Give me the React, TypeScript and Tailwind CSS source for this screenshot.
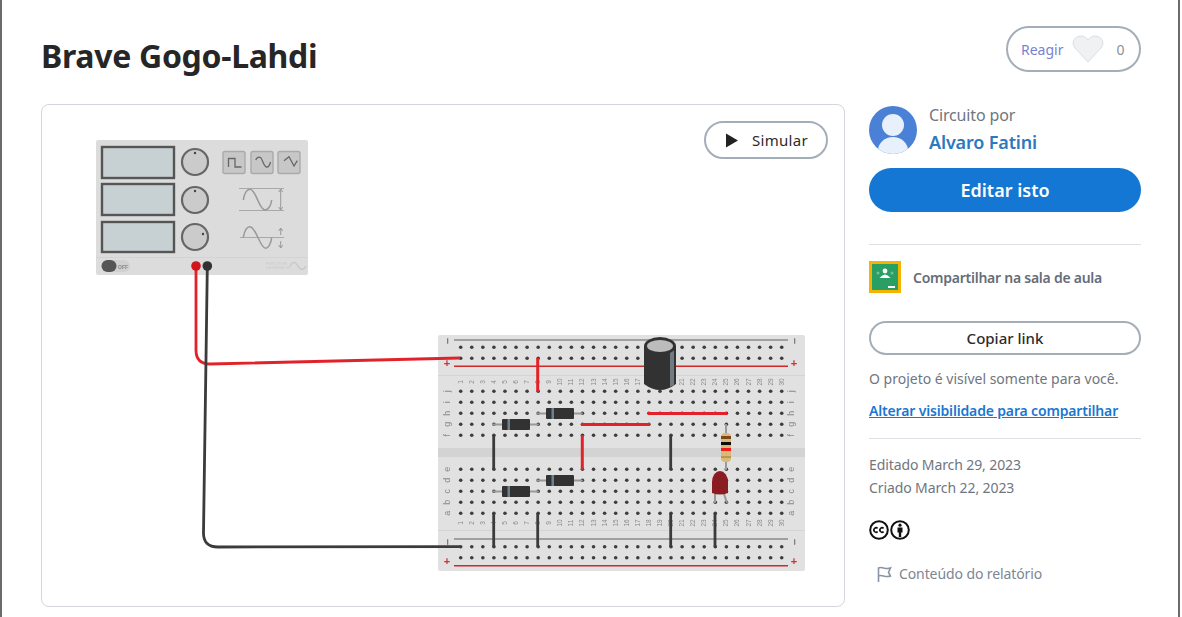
import React from "react";

const font = "[font-family:'Noto_Sans',sans-serif]";

const cols = Array.from({ length: 30 }, (_, i) => 460.7 + i * 11.07);
const railRows = [347.3, 358.3, 546.7, 557.7];
const gridRows = [391.3, 402.3, 413.3, 424.3, 435.3, 469.3, 480.3, 491.3, 502.3, 513.3];
const gridLetters = ["j", "i", "h", "g", "f", "e", "d", "c", "b", "a"];

const Diode = ({ x, y }: { x: number; y: number }) => (
  <g>
    <line x1={x} y1={y} x2={x + 45} y2={y} stroke="#999" strokeWidth="2" strokeLinecap="round" />
    <rect x={x + 9} y={y - 5.5} width="28" height="11" rx="1" fill="#333" />
    <rect x={x + 14.5} y={y - 5.5} width="2.5" height="11" fill="#6d8291" />
  </g>
);

const Breadboard = () => (
  <g>
    <rect x="438" y="335" width="367" height="236" rx="2" fill="#e1e1e1" />
    <rect x="438" y="448" width="367" height="9" fill="#d3d3d3" />
    <line x1="438" y1="375.5" x2="805" y2="375.5" stroke="#d4d4d4" />
    <line x1="438" y1="530.5" x2="805" y2="530.5" stroke="#d4d4d4" />
    <line x1="454" y1="340" x2="788" y2="340" stroke="#8a8a8a" strokeWidth="1.6" />
    <line x1="454" y1="366.3" x2="788" y2="366.3" stroke="#cf2b2b" strokeWidth="1.5" />
    <line x1="454" y1="539" x2="788" y2="539" stroke="#8a8a8a" strokeWidth="1.6" />
    <line x1="454" y1="565.7" x2="788" y2="565.7" stroke="#cf2b2b" strokeWidth="1.5" />
    {[...railRows, ...gridRows].map((y) =>
      cols.map((x) => <circle key={`${x}-${y}`} cx={x} cy={y} r="1.8" fill="#3d3d3d" />),
    )}
    {cols.map((x, i) => (
      <g key={x} fontSize="6.5" fill="#8a8a8a" fontFamily="Liberation Sans, sans-serif" textAnchor="middle">
        <text transform={`translate(${x + 2} 382) rotate(-90)`}>{i + 1}</text>
        <text transform={`translate(${x + 2} 523) rotate(-90)`}>{i + 1}</text>
      </g>
    ))}
    {gridRows.map((y, i) => (
      <g key={y} fontSize="9" fill="#8a8a8a" fontFamily="Liberation Sans, sans-serif" textAnchor="middle">
        <text transform={`translate(450 ${y}) rotate(-90)`}>{gridLetters[i]}</text>
        <text transform={`translate(794 ${y}) rotate(-90)`}>{gridLetters[i]}</text>
      </g>
    ))}
    {[
      [447, 344, "−", "#777"],
      [447, 367, "+", "#d0302f"],
      [794, 344, "−", "#777"],
      [794, 367, "+", "#d0302f"],
      [447, 545, "−", "#777"],
      [447, 565, "+", "#d0302f"],
      [794, 545, "−", "#777"],
      [794, 565, "+", "#d0302f"],
    ].map(([x, y, sign, color]) => (
      <text
        key={`${x}-${y}`}
        x={x}
        y={y}
        fontSize="11"
        fontWeight="700"
        fill={color as string}
        fontFamily="Liberation Sans, sans-serif"
        textAnchor="middle"
        transform={sign === "−" ? `rotate(90 ${x} ${(y as number) - 3})` : undefined}
      >
        {sign}
      </text>
    ))}
  </g>
);

const PowerSupply = () => (
  <g>
    <rect x="96" y="140" width="212" height="135" rx="2" fill="#dcdcdc" />
    <line x1="96" y1="257.5" x2="308" y2="257.5" stroke="#d3d3d3" />
    {[
      [147, 31],
      [184, 31],
      [222, 30],
    ].map(([y, h]) => (
      <rect key={y} x="102" y={y} width="72" height={h} fill="#c7d1d3" stroke="#555" strokeWidth="2.4" />
    ))}
    {[162, 200, 237].map((y, i) => (
      <g key={y}>
        <circle cx="195" cy={y} r="13" fill="#cbcbcb" stroke="#666" strokeWidth="2.2" />
        <circle cx={i === 2 ? 203 : 195} cy={i === 2 ? y - 3 : y - 9} r="1.2" fill="#444" />
      </g>
    ))}
    {[223, 251, 278].map((x) => (
      <rect key={x} x={x} y="151.5" width="22" height="22" rx="2" fill="#c7c7c7" stroke="#aaa" strokeWidth="1.4" />
    ))}
    <path d="M228.5 167 V158.5 H235 V167 H241.5" fill="none" stroke="#666" strokeWidth="1.3" />
    <path d="M255.7 160 C257 157 259 156.5 261 158 C263 161 264 167 267 167 C269 167 270 164 270.5 162" fill="none" stroke="#666" strokeWidth="1.3" />
    <path d="M284 160.7 L289 156.7 L294 166 L297.3 160.7" fill="none" stroke="#666" strokeWidth="1.3" />
    <g fill="none" stroke="#a9a9a9">
      <line x1="239" y1="188.5" x2="284" y2="188.5" />
      <line x1="239" y1="210.5" x2="284" y2="210.5" />
      <line x1="240" y1="237.5" x2="284" y2="237.5" />
      <path d="M243.3 200 C245 190 248 189.3 250 189.3 C256 189.3 259 210 265 210 C268 210 271 206 271.7 200" strokeWidth="1.5" stroke="#999" />
      <path d="M243.3 237.3 C245 228 248 226.7 250 226.7 C256 226.7 260 248.3 265.7 248.3 C268 248.3 271 244 271.7 237.3" strokeWidth="1.5" stroke="#999" />
      <path d="M280.7 189 v21 M278.7 192 l2 -3 l2 3 M278.7 207 l2 3 l2 -3" stroke="#999" />
      <path d="M280.7 228 v7 M280.7 241 v7 M278.7 231 l2 -3 l2 3 M278.7 245 l2 3 l2 -3" stroke="#999" />
    </g>
    <rect x="101.5" y="260" width="28.5" height="12" rx="6" fill="#d0d0d0" />
    <rect x="101.5" y="260" width="15" height="12" rx="6" fill="#555" />
    <text x="118" y="268.5" fontSize="5" fontWeight="700" fill="#888" fontFamily="Liberation Sans, sans-serif">
      OFF
    </text>
    <text x="266" y="265" fontSize="4" fill="#cacaca" fontFamily="Liberation Sans, sans-serif">
      FUNCTION
    </text>
    <text x="266" y="269" fontSize="4" fill="#cacaca" fontFamily="Liberation Sans, sans-serif">
      GENERATOR
    </text>
    <path d="M290 266 q4 -7 8 0 t8 0" fill="none" stroke="#c4c4c4" strokeWidth="1.2" />
  </g>
);

const Circuit = () => (
  <svg viewBox="42 105 802 501" className="block h-[501px] w-[802px]">
    <defs>
      <filter id="soft">
        <feGaussianBlur stdDeviation="0.45" />
      </filter>
    </defs>
    <g filter="url(#soft)">
      <PowerSupply />
      <Breadboard />

      <g stroke="#3a3a3a" strokeWidth="2.8">
        <line x1="493.7" y1="435" x2="493.7" y2="469" />
        <line x1="670.7" y1="435" x2="670.7" y2="469" />
        <line x1="493.7" y1="513" x2="493.7" y2="547" />
        <line x1="537.7" y1="513" x2="537.7" y2="547" />
        <line x1="670.7" y1="513" x2="670.7" y2="547" />
        <line x1="715" y1="513" x2="715" y2="547" />
      </g>
      <g stroke="#e2232a" strokeWidth="3">
        <line x1="537.7" y1="358" x2="537.7" y2="392" />
        <line x1="582.3" y1="435" x2="582.3" y2="470" />
        <line x1="581" y1="424.5" x2="650" y2="424.5" />
        <line x1="648" y1="413.5" x2="727" y2="413.5" />
      </g>

      <Diode x={537} y={413.5} />
      <Diode x={493} y={424.5} />
      <Diode x={537} y={480.5} />
      <Diode x={493} y={491.5} />

      {/* capacitor */}
      <path d="M644 346 v38 q16 12 32 0 v-38 z" fill="#333" />
      <path d="M670 350 h4 v35 l-4 2 z" fill="#6f7a83" />
      <ellipse cx="660" cy="346" rx="16" ry="9" fill="#333" />
      <ellipse cx="660" cy="346" rx="13" ry="6" fill="#bcbcbc" />

      {/* resistor */}
      <line x1="726" y1="424" x2="726" y2="470" stroke="#999" strokeWidth="2" />
      <rect x="721" y="433" width="10" height="29" rx="4" fill="#dcb878" />
      <rect x="721" y="436" width="10" height="3" fill="#7a4a1e" />
      <rect x="721" y="442" width="10" height="3" fill="#111" />
      <rect x="721" y="448" width="10" height="3" fill="#ee1c1c" />
      <rect x="721" y="456" width="10" height="2" fill="#b39a55" />

      {/* led */}
      <path d="M715 494 v9 M724 494 l3 9" stroke="#999" strokeWidth="2" fill="none" />
      <path d="M712 482 a8 11 0 0 1 16 0 v11 q-8 3 -16 0 z" fill="#8b1f20" />

      {/* wires */}
      <path d="M196 268 V350 Q196 364 210 364 L460 358" fill="none" stroke="#e2232a" strokeWidth="2.8" />
      <path d="M207.3 268 L203.5 532 Q203 547 218 547 L460 546.7" fill="none" stroke="#3a3a3a" strokeWidth="2.8" />
      <circle cx="196" cy="266" r="4.8" fill="#d0171c" />
      <circle cx="207.3" cy="266" r="4.8" fill="#333" />
    </g>
  </svg>
);

const Avatar = () => (
  <svg viewBox="0 0 48 48" className="h-12 w-12 shrink-0">
    <clipPath id="avatarClip">
      <circle cx="24" cy="24" r="24" />
    </clipPath>
    <g clipPath="url(#avatarClip)">
      <rect width="48" height="48" fill="#4a80d6" />
      <circle cx="24" cy="19" r="11" fill="#e8f0fb" />
      <ellipse cx="24" cy="45" rx="15" ry="14" fill="#e8f0fb" />
    </g>
  </svg>
);

const ClassroomIcon = () => (
  <div className="flex h-8 w-8 shrink-0 border-[3px] border-[#f4b400] bg-[#2a9f64]">
    <svg viewBox="0 0 26 26" className="h-full w-full">
      <circle cx="13" cy="7" r="2.4" fill="#fff" />
      <path d="M7.5 14 q5.5 -7 11 0 z" fill="#fff" />
      <circle cx="6" cy="9" r="1.5" fill="#71c097" />
      <circle cx="20" cy="9" r="1.5" fill="#71c097" />
      <rect x="16" y="22" width="7" height="2" fill="#fff" />
    </svg>
  </div>
);

const CcIcons = () => (
  <div className="flex items-center gap-[1px]">
    <svg viewBox="0 0 20 20" className="h-5 w-5">
      <circle cx="10" cy="10" r="8.8" fill="none" stroke="#111" strokeWidth="2" />
      <path d="M8.6 8.4 a2.2 2.2 0 1 0 0 3.2 M14.6 8.4 a2.2 2.2 0 1 0 0 3.2" fill="none" stroke="#111" strokeWidth="1.6" />
    </svg>
    <svg viewBox="0 0 20 20" className="h-5 w-5">
      <circle cx="10" cy="10" r="8.8" fill="none" stroke="#111" strokeWidth="2" />
      <circle cx="10" cy="5.2" r="1.6" fill="#111" />
      <path d="M7.5 7.6 h5 v5 h-1.3 v4.4 h-2.4 v-4.4 h-1.3 z" fill="#111" />
    </svg>
  </div>
);

const App = () => (
  <div className={`h-[617px] w-[1180px] overflow-hidden border-x-2 border-[#6b6b6b] bg-white pt-[26px] pr-[37px] pl-[39px] ${font}`}>
    <header className="flex h-[46px] items-start justify-between">
      <h1 className="mt-[8px] text-[32px] leading-[44px] font-bold tracking-[-0.3px] text-[#262626]">Brave Gogo-Lahdi</h1>
      <button className="flex h-[46px] w-[135px] items-center rounded-full border-2 border-[#a4aeb9] pl-[13px] text-[14px]">
        <span className="text-[#7c7fcf]">Reagir</span>
        <svg viewBox="0 0 32 28" className="ml-[9px] h-[28px] w-[32px]">
          <path d="M16 27 L3 13 C-2 6 4 1 9 1 C12 1 15 3 16 5 C17 3 20 1 23 1 C28 1 34 6 29 13 Z" fill="#eff1f3" stroke="#dcdfe3" />
        </svg>
        <span className="ml-[12px] text-[#8b9098]">0</span>
      </button>
    </header>

    <div className="mt-[32px] flex gap-6">
      <main className="relative h-[503px] w-[804px] rounded-lg border border-[#d3d6dc]">
        <Circuit />
        <button className="absolute top-4 right-4 flex h-[38px] w-[124px] items-center justify-center gap-[14px] rounded-full border-2 border-[#a4aeb9] bg-white pl-[2px] text-[15px] tracking-[0.3px] text-[#2b2b2b]">
          <svg viewBox="0 0 12 14" className="h-[15px] w-[12px]">
            <path d="M0 0 L12 7 L0 14 Z" fill="#222" />
          </svg>
          Simular
        </button>
      </main>

      <aside className="flex w-[272px] flex-col">
        <div className="flex items-center gap-3">
          <Avatar />
          <div className="pb-[1px]">
            <p className="text-[16px] leading-[22px] tracking-[-0.15px] text-[#6f7680]">Circuito por</p>
            <p className="mt-[4px] text-[18px] leading-[24px] font-semibold tracking-[-0.15px] text-[#2d78be]">Alvaro Fatini</p>
          </div>
        </div>
        <button className="mt-[13px] h-[44px] rounded-full bg-[#1477d4] text-[18px] font-semibold text-white">Editar isto</button>
        <hr className="mt-8 border-[#dcdfe3]" />
        <div className="mt-4 flex items-center gap-3">
          <ClassroomIcon />
          <span className="text-[14px] font-semibold tracking-[-0.25px] text-[#666d79]">Compartilhar na sala de aula</span>
        </div>
        <button className="mt-[28px] h-[34px] rounded-full border-2 border-[#a4aeb9] text-[15px] font-medium text-[#2b2b2b]">Copiar link</button>
        <p className="mt-[14px] text-[14px] leading-[20px] text-[#6f7680]">O projeto é visível somente para você.</p>
        <a className="mt-[12px] text-[14px] leading-[20px] font-semibold tracking-[-0.16px] text-[#1a77d2] underline">Alterar visibilidade para compartilhar</a>
        <hr className="mt-[17px] border-[#dcdfe3]" />
        <p className="mt-4 text-[14px] leading-[20px] tracking-[-0.1px] text-[#6f7680]">Editado March 29, 2023</p>
        <p className="mt-[3px] text-[14px] leading-[20px] tracking-[-0.1px] text-[#6f7680]">Criado March 22, 2023</p>
        <div className="mt-[22px]">
          <CcIcons />
        </div>
        <div className="mt-[23px] flex items-center gap-[6px] pl-[6px]">
          <svg viewBox="0 0 18 18" className="h-[18px] w-[18px]">
            <path d="M3.5 17 V3 C7 1 10 5 15.5 3 L13.5 7.5 L15.5 11 C10 13 7 9 3.5 11" fill="none" stroke="#8a94a3" strokeWidth="1.6" />
          </svg>
          <span className="text-[14px] tracking-[-0.1px] text-[#7d8694]">Conteúdo do relatório</span>
        </div>
      </aside>
    </div>
  </div>
);

export default App;
